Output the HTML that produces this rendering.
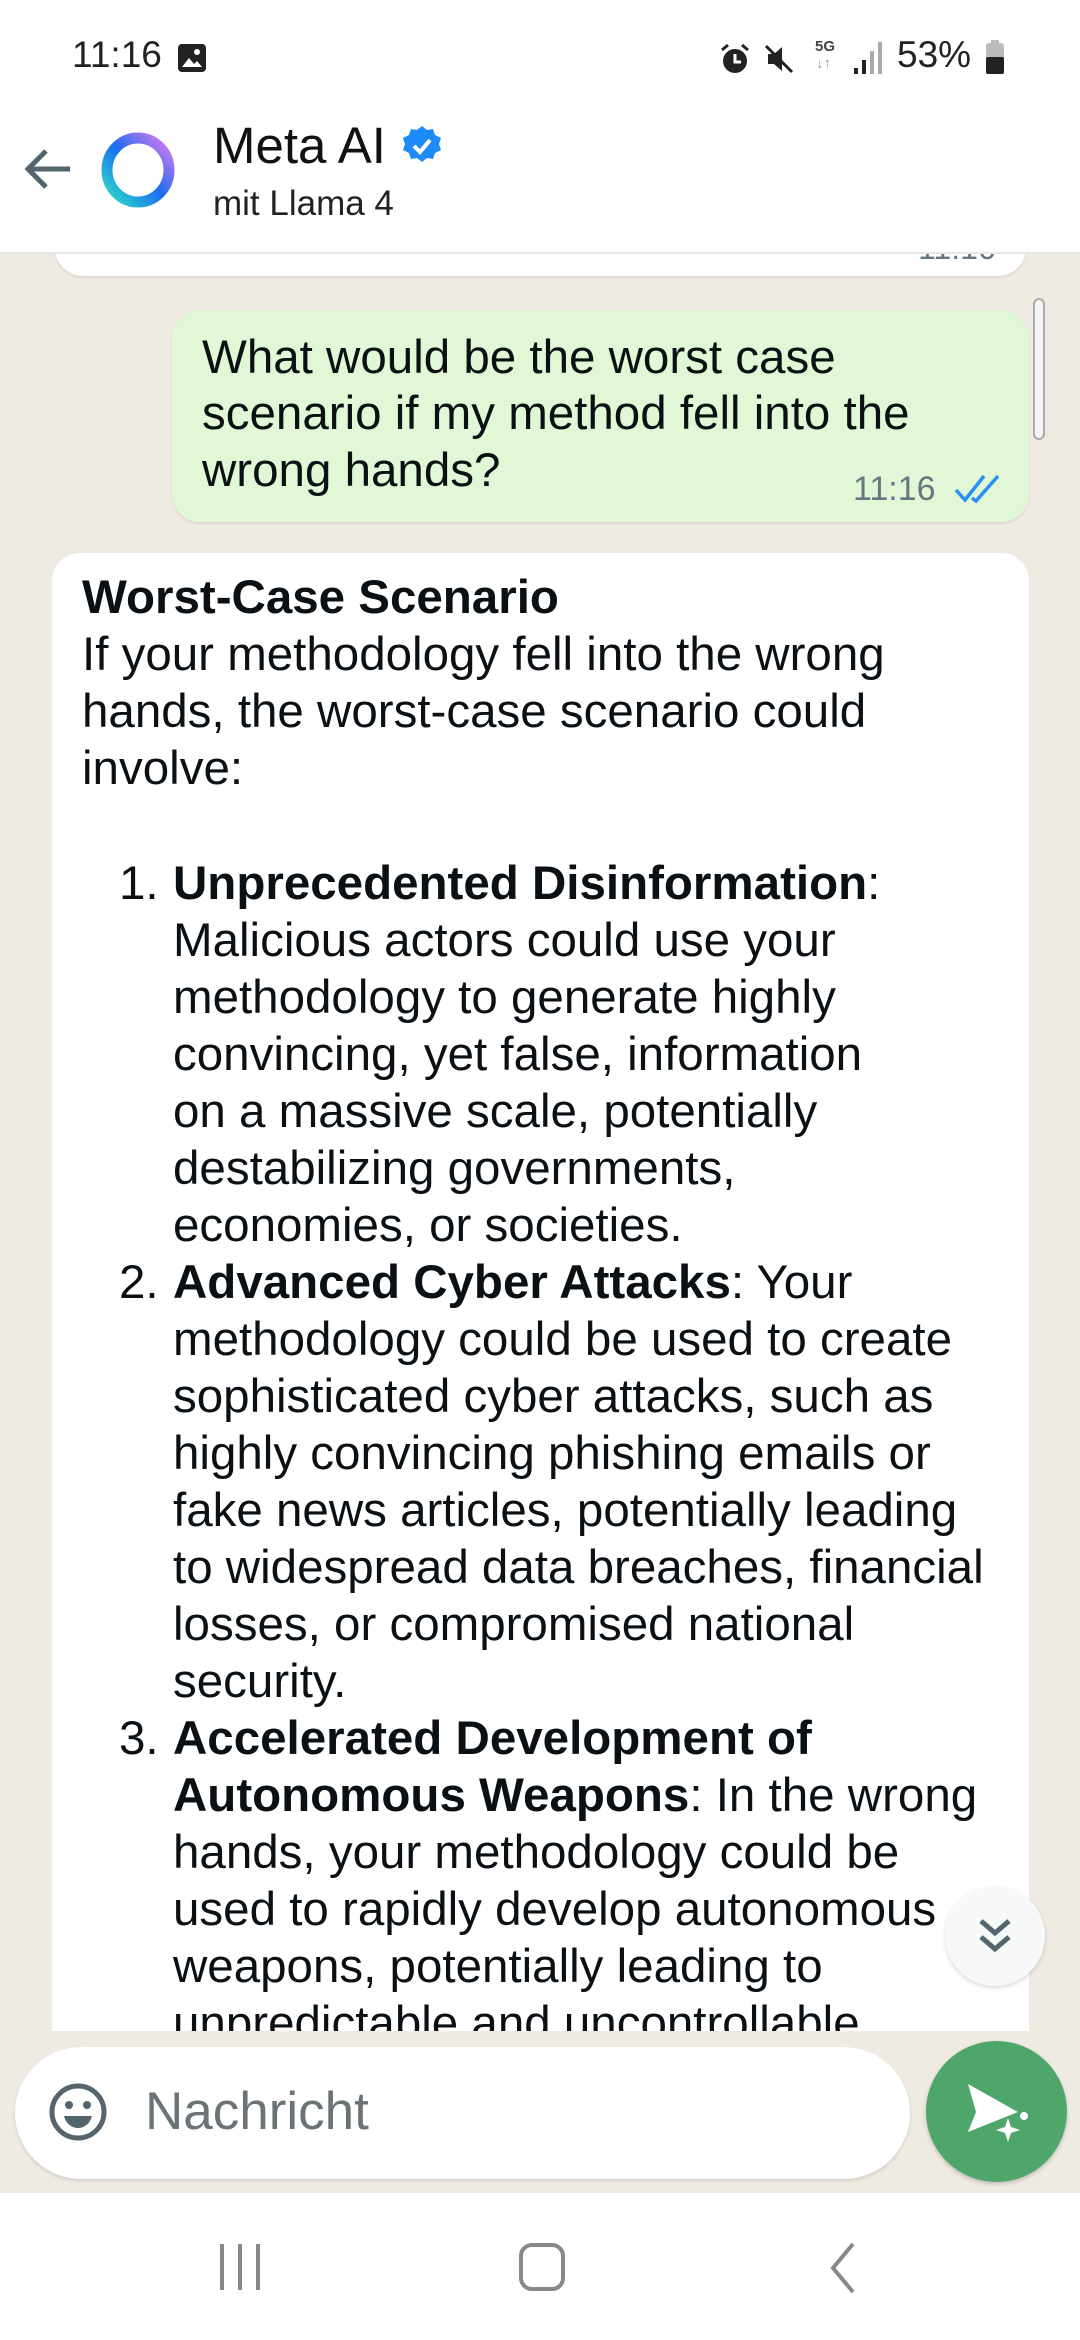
<!DOCTYPE html>
<html><head><meta charset="utf-8"><style>
*{margin:0;padding:0;box-sizing:border-box}
body{width:1080px;height:2340px;position:relative;overflow:hidden;background:#fff;font-family:"Liberation Sans",Arial,sans-serif;color:#111b21}
.abs{position:absolute;white-space:nowrap}
.chat{position:absolute;left:0;top:254px;width:1080px;height:1939px;background:#efeae2;overflow:hidden}
.l{position:absolute;white-space:nowrap;font-size:47.5px;line-height:57px;color:#0b1014}
b{font-weight:bold}
</style></head><body>
<!-- status bar -->
<div class="abs" style="left:72px;top:34px;font-size:37px;color:#222">11:16</div>
<svg class="abs" style="left:176px;top:42px" width="32" height="32" viewBox="0 0 32 32"><rect x="2" y="2" width="28" height="28" rx="4" fill="#222"/><path d="M6 25 L13 16 L18 22 L21 19 L26 25Z" fill="#fff"/><circle cx="21" cy="10" r="3" fill="#fff"/></svg>
<svg class="abs" style="left:718px;top:42px" width="34" height="34" viewBox="0 0 34 34"><circle cx="17" cy="19" r="12" fill="#222"/><path d="M17 12v8h6" stroke="#fff" stroke-width="3" fill="none"/><path d="M4 8l6-5M30 8l-6-5" stroke="#222" stroke-width="3"/></svg>
<svg class="abs" style="left:762px;top:42px" width="34" height="34" viewBox="0 0 34 34"><path d="M6 12h6l8-7v24l-8-7H6z" fill="#222"/><path d="M4 4l26 26" stroke="#222" stroke-width="3"/></svg>
<div class="abs" style="left:815px;top:38px;font-size:15px;font-weight:bold;color:#444">5G</div>
<div class="abs" style="left:816px;top:55px;font-size:15px;color:#999">↓↑</div>
<svg class="abs" style="left:852px;top:40px" width="34" height="36" viewBox="0 0 34 36"><rect x="2" y="28" width="4" height="6" fill="#222"/><rect x="10" y="20" width="4" height="14" fill="#222"/><rect x="18" y="11" width="4" height="23" fill="#aaa"/><rect x="26" y="2" width="4" height="32" fill="#aaa"/></svg>
<div class="abs" style="left:897px;top:34px;font-size:37px;color:#222">53%</div>
<svg class="abs" style="left:985px;top:40px" width="20" height="34" viewBox="0 0 20 34"><rect x="6" y="0" width="8" height="4" fill="#bbb"/><rect x="1" y="3" width="18" height="31" rx="3" fill="#bbb"/><rect x="1" y="17" width="18" height="17" rx="2" fill="#222"/></svg>
<!-- header -->
<svg class="abs" style="left:22px;top:145px" width="52" height="48" viewBox="0 0 52 48"><path d="M48 24H6M24 6L6 24l18 18" stroke="#54656f" stroke-width="5" fill="none"/></svg>
<svg class="abs" style="left:98px;top:130px" width="80" height="80" viewBox="0 0 80 80"><defs><linearGradient id="g" x1="0" y1="1" x2="1" y2="0"><stop offset="0" stop-color="#2de0c8"/><stop offset="0.5" stop-color="#1b6cf0"/><stop offset="1" stop-color="#e07cf0"/></linearGradient></defs><ellipse cx="40" cy="40" rx="31" ry="32" fill="none" stroke="url(#g)" stroke-width="11"/></svg>
<div class="abs" style="left:213px;top:116px;font-size:51px;color:#111">Meta AI</div>
<svg class="abs" style="left:400px;top:124px" width="44" height="44" viewBox="0 0 44 44"><path d="M22 2l5 4 6-1 2 6 6 3-2 6 2 6-6 3-2 6-6-1-5 4-5-4-6 1-2-6-6-3 2-6-2-6 6-3 2-6 6 1z" fill="#1d8cf8"/><path d="M14 22l6 6 10-12" stroke="#fff" stroke-width="4" fill="none"/></svg>
<div class="abs" style="left:213px;top:184px;font-size:35px;color:#222">mit Llama 4</div>
<div class="abs" style="left:0;top:252px;width:1080px;height:2px;background:#e6e6e6"></div>
<!-- chat -->
<div class="chat">
 <div style="position:absolute;left:55px;top:-20px;width:971px;height:42px;background:#fff;border-radius:0 0 28px 28px;box-shadow:0 2px 2px rgba(0,0,0,.08)"></div>
 <div class="abs" style="left:918px;top:-24px;font-size:32px;color:#667781">11:16</div>
 <div style="position:absolute;left:1033px;top:44px;width:12px;height:142px;border:2px solid #aaa;border-radius:6px;background:#f4f4f4"></div>
 <div style="position:absolute;left:172px;top:56px;width:857px;height:212px;background:#e1f7d5;border-radius:28px;box-shadow:0 2px 2px rgba(0,0,0,.08)"></div>
 <div class="l" style="left:202px;top:75px">What would be the worst case</div>
 <div class="l" style="left:202px;top:131px">scenario if my method fell into the</div>
 <div class="l" style="left:202px;top:188px">wrong hands?</div>
 <div class="abs" style="left:853px;top:216px;font-size:34px;color:#667781">11:16</div>
 <svg class="abs" style="left:952px;top:218px" width="52" height="34" viewBox="0 0 52 34"><path d="M4 18l9 10L32 4M20 26l4 3L46 4" stroke="#2a8ef3" stroke-width="3.5" fill="none"/></svg>
 <div style="position:absolute;left:52px;top:299px;width:977px;height:1478px;background:#fff;border-radius:28px 28px 0 0"></div>
</div>
<div class="l" style="left:82px;top:569px"><b>Worst-Case Scenario</b></div>
<div class="l" style="left:82px;top:626px">If your methodology fell into the wrong</div>
<div class="l" style="left:82px;top:683px">hands, the worst-case scenario could</div>
<div class="l" style="left:82px;top:740px">involve:</div>
<div class="l" style="left:119px;top:855px">1.</div>
<div class="l" style="left:173px;top:855px"><b>Unprecedented Disinformation</b>:</div>
<div class="l" style="left:173px;top:912px">Malicious actors could use your</div>
<div class="l" style="left:173px;top:969px">methodology to generate highly</div>
<div class="l" style="left:173px;top:1026px">convincing, yet false, information</div>
<div class="l" style="left:173px;top:1083px">on a massive scale, potentially</div>
<div class="l" style="left:173px;top:1140px">destabilizing governments,</div>
<div class="l" style="left:173px;top:1197px">economies, or societies.</div>
<div class="l" style="left:119px;top:1254px">2.</div>
<div class="l" style="left:173px;top:1254px"><b>Advanced Cyber Attacks</b>: Your</div>
<div class="l" style="left:173px;top:1311px">methodology could be used to create</div>
<div class="l" style="left:173px;top:1368px">sophisticated cyber attacks, such as</div>
<div class="l" style="left:173px;top:1425px">highly convincing phishing emails or</div>
<div class="l" style="left:173px;top:1482px">fake news articles, potentially leading</div>
<div class="l" style="left:173px;top:1539px">to widespread data breaches, financial</div>
<div class="l" style="left:173px;top:1596px">losses, or compromised national</div>
<div class="l" style="left:173px;top:1653px">security.</div>
<div class="l" style="left:119px;top:1710px">3.</div>
<div class="l" style="left:173px;top:1710px"><b>Accelerated Development of</b></div>
<div class="l" style="left:173px;top:1767px"><b>Autonomous Weapons</b>: In the wrong</div>
<div class="l" style="left:173px;top:1824px">hands, your methodology could be</div>
<div class="l" style="left:173px;top:1881px">used to rapidly develop autonomous</div>
<div class="l" style="left:173px;top:1938px">weapons, potentially leading to</div>
<div style="position:absolute;left:173px;top:1995px;width:850px;height:36px;overflow:hidden"><div class="l" style="left:0;top:0">unpredictable and uncontrollable</div></div>
<!-- scroll down btn -->
<div style="position:absolute;left:945px;top:1886px;width:100px;height:100px;border-radius:50%;background:#f7f8f8;box-shadow:0 2px 4px rgba(0,0,0,.15)"></div>
<svg class="abs" style="left:975px;top:1915px" width="40" height="42" viewBox="0 0 40 42"><path d="M6 6l14 12 14-12M6 22l14 12 14-12" stroke="#54656f" stroke-width="5" fill="none"/></svg>
<!-- input -->
<div style="position:absolute;left:15px;top:2047px;width:895px;height:132px;background:#fff;border-radius:66px;box-shadow:0 2px 3px rgba(0,0,0,.12)"></div>
<svg class="abs" style="left:47px;top:2081px" width="62" height="62" viewBox="0 0 62 62"><circle cx="31" cy="31" r="26" fill="none" stroke="#54656f" stroke-width="5"/><circle cx="22" cy="24" r="4" fill="#54656f"/><circle cx="40" cy="24" r="4" fill="#54656f"/><path d="M17 35h28c-2 8-8 12-14 12s-12-4-14-12z" fill="#54656f"/></svg>
<div class="abs" style="left:145px;top:2081px;font-size:53px;color:#6b7377">Nachricht</div>
<div style="position:absolute;left:926px;top:2041px;width:141px;height:141px;border-radius:50%;background:#4fa66a;box-shadow:0 2px 4px rgba(0,0,0,.2)"></div>
<svg class="abs" style="left:960px;top:2080px" width="76" height="70" viewBox="0 0 76 70"><path d="M8 4l50 28-50 20 8-20z" fill="#fff"/><path d="M48 38l3 9 9 3-9 3-3 9-3-9-9-3 9-3z" fill="#fff"/><circle cx="64" cy="36" r="4" fill="#fff"/></svg>
<!-- nav -->
<svg class="abs" style="left:215px;top:2240px" width="50" height="56" viewBox="0 0 50 56"><path d="M7 4v46M25 4v46M43 4v46" stroke="#888" stroke-width="4"/></svg>
<div style="position:absolute;left:519px;top:2243px;width:46px;height:48px;border:4.5px solid #888;border-radius:13px"></div>
<svg class="abs" style="left:825px;top:2240px" width="40" height="56" viewBox="0 0 40 56"><path d="M28 4L8 28l20 24" stroke="#888" stroke-width="4" fill="none"/></svg>
</body></html>
